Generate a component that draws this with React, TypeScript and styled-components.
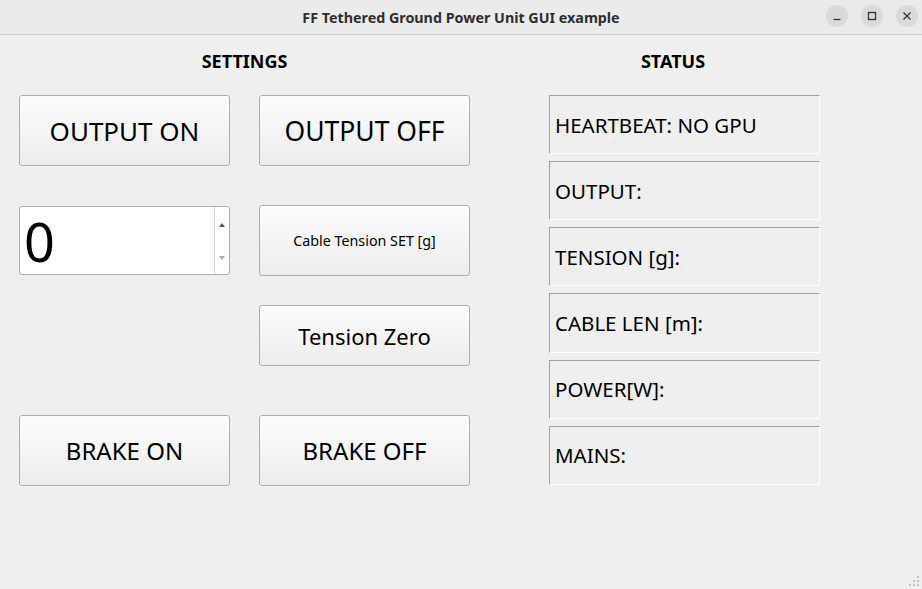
import React, { useState } from "react";
import styled, { createGlobalStyle } from "styled-components";

const GlobalStyle = createGlobalStyle`
  html, body {
    margin: 0;
    padding: 0;
    background: #efefef;
    font-family: "Noto Sans", "DejaVu Sans", sans-serif;
    color: #000;
  }
`;

const Window = styled.div`
  width: 922px;
  height: 589px;
  display: flex;
  flex-direction: column;
  background: #efefef;
  position: relative;
  overflow: hidden;
`;

const TitleBar = styled.div`
  height: 34px;
  flex: 0 0 34px;
  background: #ebebeb;
  border-bottom: 1px solid #cfcfcf;
  display: flex;
  align-items: center;
  justify-content: center;
  position: relative;
`;

const Title = styled.div`
  font-size: 14.3px;
  font-weight: 700;
  color: #2e2e2e;
`;

const Controls = styled.div`
  position: absolute;
  right: 4px;
  top: 5px;
  display: flex;
  gap: 13px;
`;

const CtrlButton = styled.div`
  width: 22px;
  height: 22px;
  border-radius: 50%;
  background: #dadada;
  display: flex;
  align-items: center;
  justify-content: center;
`;

const Body = styled.div`
  flex: 1;
  display: flex;
  padding-left: 19px;
  gap: 79px;
`;

const Column = styled.div<{ $width: number }>`
  width: ${(p) => p.$width}px;
  display: flex;
  flex-direction: column;
`;

const Header = styled.div<{ $shift?: number }>`
  height: 52px;
  line-height: 52px;
  text-align: center;
  font-weight: 700;
  font-size: 18px;
  padding-right: ${(p) => p.$shift ?? 0}px;
  margin-bottom: 8px;
`;

const Row = styled.div<{ $top: number; $height: number }>`
  display: grid;
  grid-template-columns: 211px 211px;
  column-gap: 29px;
  margin-top: ${(p) => p.$top}px;
  height: ${(p) => p.$height}px;
`;

const PushButton = styled.button<{ $size: number }>`
  font-family: "Noto Sans", "DejaVu Sans", sans-serif;
  font-size: ${(p) => p.$size}px;
  color: #000;
  background: linear-gradient(to bottom, #fdfdfd, #ececec);
  border: 1px solid #adadad;
  border-radius: 3px;
  padding: 0;
  margin: 0;
  height: 100%;
  cursor: pointer;
`;

const SpinBox = styled.div`
  display: flex;
  background: #fff;
  border: 1px solid #adadad;
  border-radius: 3px;
  height: 69px;
  margin-top: 1px;
  box-sizing: border-box;
`;

const SpinInput = styled.input`
  flex: 1;
  min-width: 0;
  border: none;
  outline: none;
  background: transparent;
  font-family: "Noto Sans", "DejaVu Sans", sans-serif;
  font-size: 54px;
  padding: 0 0 0 4px;
  color: #000;
`;

const SpinArrows = styled.div`
  width: 14px;
  border-left: 1px solid #d4d4d4;
  display: flex;
  flex-direction: column;
  align-items: center;
  justify-content: space-between;
  padding: 16px 0 14px;
`;

const Arrow = styled.div<{ $down?: boolean; $color: string }>`
  width: 0;
  height: 0;
  border-left: 3.5px solid transparent;
  border-right: 3.5px solid transparent;
  ${(p) =>
    p.$down
      ? `border-top: 4px solid ${p.$color};`
      : `border-bottom: 4px solid ${p.$color};`}
`;

const StatusList = styled.div`
  display: flex;
  flex-direction: column;
  gap: 7px;
`;

const StatusBox = styled.div`
  height: 59.17px;
  box-sizing: border-box;
  border-top: 1px solid #a0a0a0;
  border-left: 1px solid #a0a0a0;
  border-right: 1px solid #ffffff;
  border-bottom: 1px solid #ffffff;
  display: flex;
  align-items: center;
  padding-left: 5px;
  font-size: 20.5px;
  color: #000;
`;

const Grip = styled.svg`
  position: absolute;
  right: 2px;
  bottom: 2px;
`;

const statusItems = [
  "HEARTBEAT: NO GPU",
  "OUTPUT:",
  "TENSION [g]:",
  "CABLE LEN [m]:",
  "POWER[W]:",
  "MAINS:",
];

export default function App() {
  const [tension, setTension] = useState("0");

  return (
    <>
      <GlobalStyle />
      <Window>
        <TitleBar>
          <Title>FF Tethered Ground Power Unit GUI example</Title>
          <Controls>
            <CtrlButton>
              <svg width="10" height="10" viewBox="0 0 10 10">
                <path d="M1.5 8.5h7" stroke="#333" strokeWidth="1.3" />
              </svg>
            </CtrlButton>
            <CtrlButton>
              <svg width="10" height="10" viewBox="0 0 10 10">
                <rect x="1.5" y="1.5" width="7" height="7" fill="none" stroke="#333" strokeWidth="1.3" />
              </svg>
            </CtrlButton>
            <CtrlButton>
              <svg width="10" height="10" viewBox="0 0 10 10">
                <path d="M1.5 1.5l7 7M8.5 1.5l-7 7" stroke="#333" strokeWidth="1.3" />
              </svg>
            </CtrlButton>
          </Controls>
        </TitleBar>
        <Body>
          <Column $width={451}>
            <Header>SETTINGS</Header>
            <Row $top={0} $height={71}>
              <PushButton $size={26}>OUTPUT ON</PushButton>
              <PushButton $size={26.5}>OUTPUT OFF</PushButton>
            </Row>
            <Row $top={39} $height={71}>
              <SpinBox>
                <SpinInput value={tension} onChange={(e) => setTension(e.target.value)} />
                <SpinArrows>
                  <Arrow $color="#555" />
                  <Arrow $down $color="#aaa" />
                </SpinArrows>
              </SpinBox>
              <PushButton $size={14.3}>Cable Tension SET [g]</PushButton>
            </Row>
            <Row $top={29} $height={61}>
              <div />
              <PushButton $size={22}>Tension Zero</PushButton>
            </Row>
            <Row $top={49} $height={71}>
              <PushButton $size={24}>BRAKE ON</PushButton>
              <PushButton $size={24}>BRAKE OFF</PushButton>
            </Row>
          </Column>
          <Column $width={271}>
            <Header $shift={23}>STATUS</Header>
            <StatusList>
              {statusItems.map((s) => (
                <StatusBox key={s}>{s}</StatusBox>
              ))}
            </StatusList>
          </Column>
        </Body>
        <Grip width="14" height="14" viewBox="0 0 14 14">
          {[
            [11, 3],
            [7, 7],
            [11, 7],
            [3, 11],
            [7, 11],
            [11, 11],
          ].map(([x, y]) => (
            <rect key={`${x}-${y}`} x={x} y={y} width="2" height="2" fill="#c4c4c4" />
          ))}
        </Grip>
      </Window>
    </>
  );
}
